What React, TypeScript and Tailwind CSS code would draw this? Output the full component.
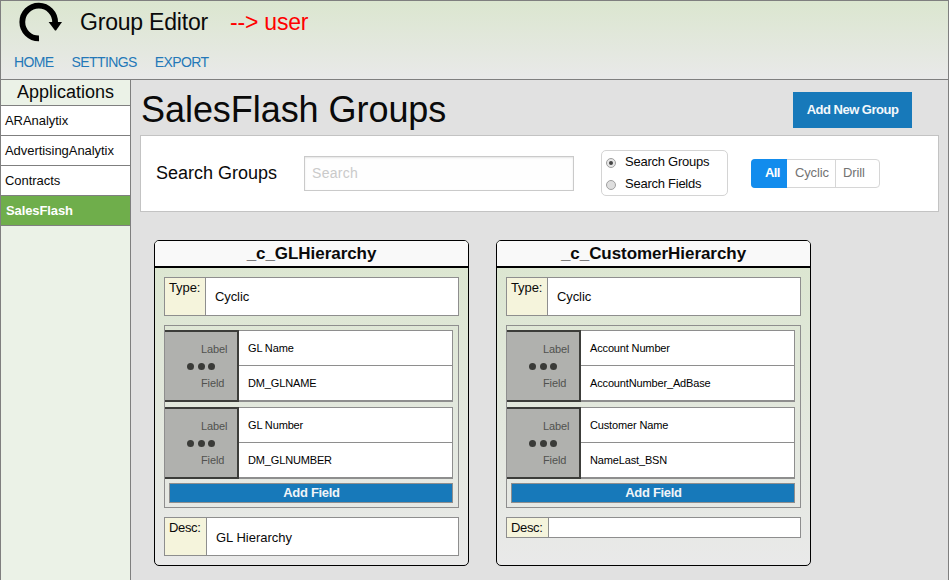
type Field = { label: string; field: string };
type Group = { name: string; type: string; fields: Field[]; desc: string };

const groups: Group[] = [
  {
    name: "_c_GLHierarchy",
    type: "Cyclic",
    fields: [
      { label: "GL Name", field: "DM_GLNAME" },
      { label: "GL Number", field: "DM_GLNUMBER" },
    ],
    desc: "GL Hierarchy",
  },
  {
    name: "_c_CustomerHierarchy",
    type: "Cyclic",
    fields: [
      { label: "Account Number", field: "AccountNumber_AdBase" },
      { label: "Customer Name", field: "NameLast_BSN" },
    ],
    desc: "",
  },
];

const apps = ["ARAnalytix", "AdvertisingAnalytix", "Contracts", "SalesFlash"];

function Logo() {
  return (
    <svg width="46" height="42" viewBox="0 0 46 42" className="block">
      <path d="M22 36.4A16.4 16.4 0 1 1 38.1 20.5" fill="none" stroke="#000" strokeWidth="5.8" />
      <path d="M31.6 20H45L39 28.6H38Z" fill="#000" />
    </svg>
  );
}

function FieldRow({ label, field }: Field) {
  return (
    <div className="flex h-[72px] w-[288px] text-[11px]">
      <div className="flex w-[74px] shrink-0 flex-col border-y-2 border-r-2 border-[#3c3d3a] bg-[#b0b1ae] pl-[36px] tracking-[-0.1px] text-[#50514f]">
        <div className="mt-[10px] h-[14px] leading-[14px]">Label</div>
        <div className="-ml-[14px] mt-[7px] flex h-[8px] gap-[3.5px]">
          <span className="size-[7px] rounded-full bg-[#3a3b38]" />
          <span className="size-[7px] rounded-full bg-[#3a3b38]" />
          <span className="size-[7px] rounded-full bg-[#3a3b38]" />
        </div>
        <div className="mt-[5px] h-[14px] leading-[14px]">Field</div>
      </div>
      <div className="flex grow flex-col border-b-2 border-r border-t border-[#8e8e8e] bg-white tracking-[-0.15px] text-black">
        <div className="h-[35px] border-b border-[#8e8e8e] pl-[9px] leading-[35px]">{label}</div>
        <div className="pl-[9px] leading-[35px]">{field}</div>
      </div>
    </div>
  );
}

function GroupCard({ group }: { group: Group }) {
  return (
    <section className="flex h-[326px] w-[315px] flex-col overflow-hidden rounded-[5px] border border-black bg-linear-to-b from-[#dbe6cf] to-[#e9e9e9]">
      <h2 className="h-[27px] shrink-0 border-b-2 border-black bg-[#f9f9f9] text-center text-[17px] font-bold leading-[25px] tracking-[-0.05px]">
        {group.name}
      </h2>
      <div className="mx-[9px] mt-[9px] flex h-[39px] border border-[#8e8e8e] bg-white">
        <div className="w-[41px] border-r border-[#8e8e8e] bg-[#f5f4dc] pl-1 pt-[2px] text-[13px] leading-4 tracking-[-0.1px]">Type:</div>
        <div className="pl-[9px] text-[13px] leading-[37px] tracking-[-0.1px]">{group.type}</div>
      </div>
      <div className="mx-[9px] mt-[9px] flex h-[183px] flex-col gap-[5px] border border-[#8e8e8e] pt-1">
        {group.fields.map((f) => (
          <FieldRow key={f.field} {...f} />
        ))}
        <button className="-mt-[1px] ml-1 flex h-5 w-[284px] justify-center border border-[#8e8e8e] bg-[#1779ba] pl-px text-[13px] font-bold leading-[17px] tracking-[-0.3px] text-[#f0f4f8]">
          Add Field
        </button>
      </div>
      <div
        className={
          group.desc
            ? "mx-[9px] mt-[9px] flex h-[39px] border border-[#8e8e8e] bg-white"
            : "mx-[9px] mt-[9px] flex h-[21px] border border-[#8e8e8e] bg-white"
        }
      >
        <div className="w-[42px] border-r border-[#8e8e8e] bg-[#f5f4dc] pl-1 pt-px text-[13px] leading-[18px] tracking-[-0.35px]">Desc:</div>
        <div className="pl-[9px] text-[13px] leading-[39px]">{group.desc}</div>
      </div>
    </section>
  );
}

export default function App() {
  return (
    <div className="flex h-[580px] w-[949px] flex-col overflow-hidden border-x border-t border-[#7f7f7f] bg-[#e1e1e1] font-['Liberation_Sans',Arial,sans-serif] text-[#0a0a0a]">
      <header className="h-[79px] shrink-0 border-b border-[#7f7f7f] bg-linear-to-b from-[#dbe6cf] to-[#e9e9e9]">
        <div className="flex h-[46px]">
          <div className="ml-[16px] w-[63px] pt-[1px]">
            <Logo />
          </div>
          <h1 className="w-[150px] whitespace-nowrap text-[23px] leading-[42px] tracking-[-0.2px]">Group Editor</h1>
          <span className="text-[23px] leading-[42px] tracking-[-0.2px] text-[#ff0000]">--&gt; user</span>
        </div>
        <nav className="flex gap-[18px] pl-[13px] text-[14px] leading-[30px] tracking-[-0.6px] text-[#2478b8]">
          <a>HOME</a>
          <a>SETTINGS</a>
          <a>EXPORT</a>
        </nav>
      </header>
      <div className="flex min-h-0 grow">
        <aside className="w-[130px] shrink-0 border-r border-[#7f7f7f] bg-[#ebf2e7]">
          <h2 className="h-[26px] border-b border-[#7f7f7f] text-center text-[18px] leading-[24px]">Applications</h2>
          {apps.map((a) =>
            a === "SalesFlash" ? (
              <div key={a} className="h-[30px] border-b border-[#7f7f7f] bg-[#6fae4b] pl-[5px] text-[13px] font-bold leading-[30px] tracking-[-0.1px] text-white">{a}</div>
            ) : (
              <div key={a} className="h-[30px] border-b border-[#7f7f7f] bg-white pl-1 text-[13px] leading-[29px] tracking-[-0.05px]">{a}</div>
            ),
          )}
        </aside>
        <main className="grow pl-[9px]">
          <div className="flex h-[55px] justify-between pr-[36px]">
            <h1 className="pl-px text-[36px] leading-[60px] tracking-[-0.05px]">SalesFlash Groups</h1>
            <button className="mt-3 h-9 w-[119px] bg-[#1779ba] text-[13px] font-bold tracking-[-0.5px] text-[#f4f8fb]">Add New Group</button>
          </div>
          <div className="flex h-[77px] w-[799px] items-start border border-[#c3c3c3] bg-white">
            <span className="w-[163px] pl-[15px] text-[18px] leading-[74px]">Search Groups</span>
            <input
              placeholder="Search"
              className="mt-5 h-[35px] w-[270px] border border-[#cacaca] bg-[#fefefe] px-[7px] pb-[2px] text-[14px] tracking-[0.3px] shadow-[inset_0_1px_2px_rgba(10,10,10,0.1)] placeholder:text-[#cacaca]"
            />
            <div className="ml-[27px] mt-[14px] h-[46px] w-[127px] rounded-[5px] border border-[#d4d4d4] pl-1 text-[13px] tracking-[-0.25px]">
              <label className="flex h-[22px] items-center gap-[9px]">
                <span className="mt-[2px] flex size-[10px] items-center justify-center rounded-full border border-[#a0a0a0] bg-[#e6e6e6]">
                  <span className="size-1 rounded-full bg-[#444]" />
                </span>
                Search Groups
              </label>
              <label className="flex h-[22px] items-center gap-[9px]">
                <span className="mt-[2px] size-[10px] rounded-full border border-[#a0a0a0] bg-[#dedede]" />
                Search Fields
              </label>
            </div>
            <div className="ml-[23px] mt-[23px] flex h-[29px] w-[129px] rounded-[4px] border border-[#d6d6d6] text-[13px] leading-[26px] tracking-[-0.15px] text-[#737373]">
              <div className="-my-px -ml-px w-[36px] rounded-l-[4px] bg-[#128ced] pl-[14px] font-bold leading-[28px] tracking-[-0.6px] text-white">All</div>
              <div className="w-[49px] border-r border-[#d6d6d6] pl-2">Cyclic</div>
              <div className="pl-[7px]">Drill</div>
            </div>
          </div>
          <div className="flex gap-[27px] pl-[14px] pt-[28px]">
            {groups.map((g) => (
              <GroupCard key={g.name} group={g} />
            ))}
          </div>
        </main>
      </div>
    </div>
  );
}
